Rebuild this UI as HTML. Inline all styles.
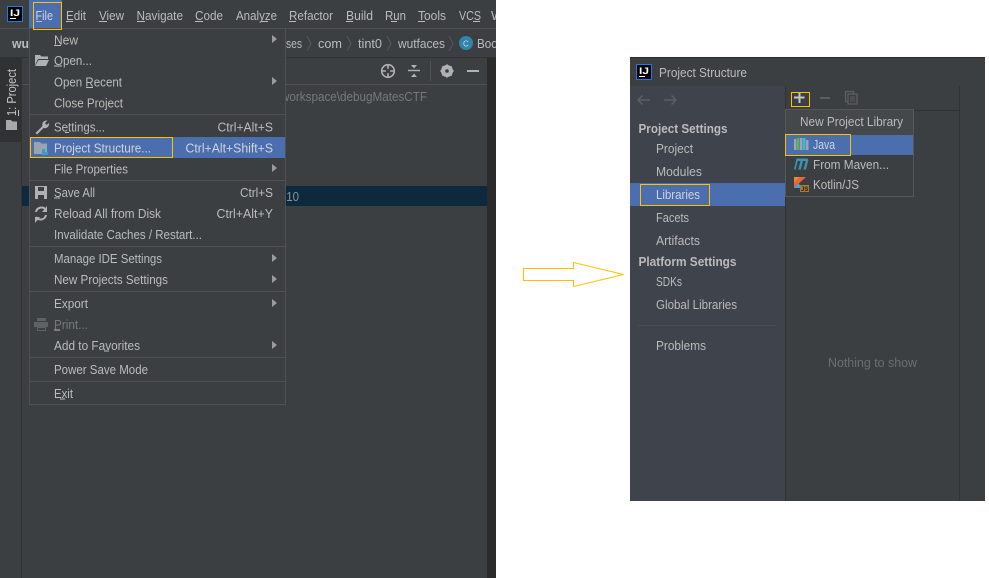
<!DOCTYPE html>
<html><head><meta charset="utf-8"><style>
html,body{margin:0;padding:0;background:#fff;width:989px;height:578px;overflow:hidden}
svg{display:block}
text{font-family:"Liberation Sans",sans-serif;font-size:13px;fill:#bbbbbb;white-space:pre}
.h{fill:#cfd3da}
.d{fill:#777}
.u{stroke:#bbb;stroke-width:1;shape-rendering:crispEdges}
</style></head><body>
<svg xmlns="http://www.w3.org/2000/svg" width="989" height="578" viewBox="0 0 989 578">
<defs><clipPath id="L"><rect x="0" y="0" width="496" height="578"/></clipPath></defs>
<rect width="989" height="578" fill="#fff"/>
<g clip-path="url(#L)">
<rect x="0" y="0" width="496" height="578" fill="#3c3f41"/>
<rect x="0" y="28" width="496" height="1" fill="#515151"/>
<rect x="0" y="57" width="496" height="1" fill="#323232"/>
<rect x="21" y="58" width="1" height="520" fill="#323232"/>
<rect x="0" y="58" width="21" height="84" fill="#2f3132"/>
<rect x="22" y="84" width="465" height="1" fill="#515151"/>
<rect x="487" y="58" width="9" height="520" fill="#2b2b2b"/>
<rect x="22" y="186" width="465" height="20" fill="#0d293e"/>
<!-- logo -->
<rect x="7.500" y="6.500" width="15" height="15" fill="#000" stroke="#1c7be0"/>
<text x="10" y="16" textLength="10" lengthAdjust="spacingAndGlyphs" style="font-size:9px;font-weight:bold;fill:#fff">IJ</text>
<rect x="10" y="18" width="6" height="1" fill="#fff"/>
<!-- menubar -->
<rect x="29" y="0" width="33" height="28" fill="#4b6eaf"/>
<g>
<text x="35.500" y="20" textLength="17.500" lengthAdjust="spacingAndGlyphs" class="h">File</text>
<text x="66" y="20" textLength="20" lengthAdjust="spacingAndGlyphs">Edit</text>
<text x="99" y="20" textLength="25" lengthAdjust="spacingAndGlyphs">View</text>
<text x="136.500" y="20" textLength="46.500" lengthAdjust="spacingAndGlyphs">Navigate</text>
<text x="195" y="20" textLength="28" lengthAdjust="spacingAndGlyphs">Code</text>
<text x="236" y="20" textLength="41" lengthAdjust="spacingAndGlyphs">Analyze</text>
<text x="289" y="20" textLength="44" lengthAdjust="spacingAndGlyphs">Refactor</text>
<text x="346" y="20" textLength="27" lengthAdjust="spacingAndGlyphs">Build</text>
<text x="385" y="20" textLength="21" lengthAdjust="spacingAndGlyphs">Run</text>
<text x="418" y="20" textLength="28" lengthAdjust="spacingAndGlyphs">Tools</text>
<text x="459" y="20" textLength="22" lengthAdjust="spacingAndGlyphs">VCS</text>
<text x="491" y="20">Window</text>
<path class="u" d="M36 21.500h6M66 21.500h7M99 21.500h8M137 21.500h8M195 21.500h8M262 21.500h6M289 21.500h7M346 21.500h7M391 21.500h6M418 21.500h7M473 21.500h7"/>
</g>
<!-- breadcrumb -->
<text x="12" y="48" textLength="17" lengthAdjust="spacingAndGlyphs" style="font-weight:bold">wu</text>
<text x="286" y="48" textLength="16" lengthAdjust="spacingAndGlyphs">ses</text>
<text x="318" y="48" textLength="24" lengthAdjust="spacingAndGlyphs">com</text>
<text x="358" y="48" textLength="24" lengthAdjust="spacingAndGlyphs">tint0</text>
<text x="398" y="48" textLength="47" lengthAdjust="spacingAndGlyphs">wutfaces</text>
<text x="477" y="48" textLength="24" lengthAdjust="spacingAndGlyphs">Boot</text>
<path d="M307 36l4 7.500-4 7.500M347 36l4 7.500-4 7.500M387 36l4 7.500-4 7.500M449 36l4 7.500-4 7.500" fill="none" stroke="#56595b"/>
<circle cx="466" cy="43" r="7" fill="#2f84a8"/>
<text x="463" y="46.500" style="font-size:8px;fill:#cde">C</text>
<!-- toolbar -->
<circle cx="388" cy="71" r="6.300" fill="none" stroke="#afb1b3" stroke-width="1.600"/>
<path d="M388 64v14M381 71h14" stroke="#afb1b3" stroke-width="1.600"/>
<circle cx="388" cy="71" r="2.200" fill="#3c3f41"/>
<path d="M408 70.500h12" stroke="#afb1b3" stroke-width="1.400"/>
<path d="M411 65h6l-3 3.500zM411 77h6l-3-3.500z" fill="#afb1b3"/>
<rect x="430" y="61" width="1" height="20" fill="#515151"/>
<circle cx="447" cy="71" r="4.500" fill="none" stroke="#afb1b3" stroke-width="3"/>
<path d="M447 64.500v13M440.500 71h13M442.400 66.400l9.200 9.200M451.600 66.400l-9.200 9.200" stroke="#afb1b3" stroke-width="2"/>
<circle cx="447" cy="71" r="1.800" fill="#3c3f41"/>
<rect x="467" y="70" width="12" height="2" fill="#afb1b3"/>
<text x="281" y="101" textLength="146" lengthAdjust="spacingAndGlyphs" style="fill:#787878">workspace\debugMatesCTF</text>
<text x="283" y="201" textLength="16" lengthAdjust="spacingAndGlyphs" style="fill:#8a9298">.10</text>
<!-- tool tab -->
<text transform="translate(16,116) rotate(-90)" textLength="47" lengthAdjust="spacingAndGlyphs" style="fill:#c4c4c4">1: Project</text>
<rect x="18" y="110" width="1" height="6" fill="#c4c4c4"/>
<path d="M6 120h5l1.500 1.500H17V130H6z" fill="#a8a8a8"/>

<!-- FILE MENU -->
<rect x="29.500" y="28.500" width="256" height="376" fill="#3c3f41" stroke="#515151"/>
<path d="M30 114.500h255M30 180.500h255M30 246.500h255M30 291.500h255M30 357.500h255M30 381.500h255" stroke="#515151"/>
<rect x="30" y="137" width="255" height="21" fill="#4b6eaf"/>
<g>
<text x="54" y="44.500" textLength="24" lengthAdjust="spacingAndGlyphs">New</text>
<text x="54" y="65" textLength="38" lengthAdjust="spacingAndGlyphs">Open...</text>
<text x="54" y="86.500" textLength="68" lengthAdjust="spacingAndGlyphs">Open Recent</text>
<text x="54" y="107.500" textLength="69" lengthAdjust="spacingAndGlyphs">Close Project</text>
<text x="54" y="131.500" textLength="51" lengthAdjust="spacingAndGlyphs">Settings...</text>
<text x="54" y="152.500" textLength="97" lengthAdjust="spacingAndGlyphs" class="h">Project Structure...</text>
<text x="54" y="173.500" textLength="74" lengthAdjust="spacingAndGlyphs">File Properties</text>
<text x="54" y="197" textLength="41" lengthAdjust="spacingAndGlyphs">Save All</text>
<text x="54" y="218" textLength="107" lengthAdjust="spacingAndGlyphs">Reload All from Disk</text>
<text x="54" y="239" textLength="148" lengthAdjust="spacingAndGlyphs">Invalidate Caches / Restart...</text>
<text x="54" y="263" textLength="108" lengthAdjust="spacingAndGlyphs">Manage IDE Settings</text>
<text x="54" y="284" textLength="114" lengthAdjust="spacingAndGlyphs">New Projects Settings</text>
<text x="54" y="308" textLength="34" lengthAdjust="spacingAndGlyphs">Export</text>
<text x="54" y="329" textLength="34" lengthAdjust="spacingAndGlyphs" class="d">Print...</text>
<text x="54" y="350" textLength="86" lengthAdjust="spacingAndGlyphs">Add to Favorites</text>
<text x="54" y="374" textLength="94" lengthAdjust="spacingAndGlyphs">Power Save Mode</text>
<text x="54" y="398" textLength="19" lengthAdjust="spacingAndGlyphs">Exit</text>
<text x="217.500" y="131.500" textLength="55.500" lengthAdjust="spacingAndGlyphs">Ctrl+Alt+S</text>
<text x="185.500" y="152.500" textLength="87.500" lengthAdjust="spacingAndGlyphs" class="h">Ctrl+Alt+Shift+S</text>
<text x="240" y="197" textLength="33" lengthAdjust="spacingAndGlyphs">Ctrl+S</text>
<text x="216.500" y="218" textLength="56.500" lengthAdjust="spacingAndGlyphs">Ctrl+Alt+Y</text>
<path class="u" d="M54 45.500h7M54 66h8M86 87.500h7M65 132.500h4M54 198h6M54 330h6M104 351h5M60 399h5"/>
<path d="M272 35v8l5-4zM272 77v8l5-4zM272 164v8l5-4zM272 254v8l5-4zM272 275v8l5-4zM272 299v8l5-4zM272 341v8l5-4z" fill="#9a9c9e"/>
</g>
<!-- menu icons -->
<path d="M35 55h5l1.500 1.500H48V59H38l-3 6z" fill="#afb1b3"/><path d="M38.500 60H49l-3 6H35z" fill="#afb1b3"/>
<path d="M35.500 133l7-7c-1-3 1-6 5-5.500l-2.500 2.500 1.500 2 2.500-2c.5 3.500-2.500 6-5.500 5l-6.500 6.500z" fill="#afb1b3"/>
<path d="M34 142h6l1.500 1.500H47V154H34z" fill="#9aa3b0"/><rect x="42" y="149" width="3" height="3" fill="#3a9bd0"/><rect x="45" y="152" width="3" height="3" fill="#3a9bd0"/><rect x="42" y="152" width="3" height="3" fill="#3a9bd0"/>
<path d="M35 186h12v13H35z" fill="#afb1b3"/><rect x="38" y="187" width="6" height="4" fill="#3c3f41"/><rect x="38" y="195" width="6" height="4" fill="#3c3f41"/>
<path d="M36 212a5.500 5.500 0 0 1 10-2M46 215a5.500 5.500 0 0 1-10 2" fill="none" stroke="#afb1b3" stroke-width="2"/><path d="M47 206v6h-5zM35 223v-6h5z" fill="#afb1b3"/>
<rect x="37" y="318" width="9" height="3" fill="#5f6264"/><rect x="34" y="322" width="14" height="5" fill="#5f6264"/><rect x="37.500" y="327.500" width="8" height="3" fill="none" stroke="#5f6264"/>
<!-- yellow boxes -->
<rect x="33.500" y="2.500" width="28" height="27" fill="none" stroke="#ffc000"/>
<rect x="30.500" y="137.500" width="142" height="20" fill="none" stroke="#ffc000"/>
</g>

<!-- arrow -->
<path d="M523.500 268.500H573.500V262.500L623.500 274.500L573.500 286.500V280.500H523.500Z" fill="#fff" stroke="#ffc000"/>

<!-- DIALOG -->
<rect x="630" y="57" width="355" height="444" fill="#3c3f41"/>
<rect x="630" y="57" width="355" height="1" fill="#2b2b2b"/>
<rect x="630" y="86" width="155" height="415" fill="#3e434c"/>
<rect x="785" y="86" width="1" height="415" fill="#323232"/>
<rect x="959" y="86" width="1" height="415" fill="#323232"/>
<rect x="785" y="110" width="175" height="1" fill="#323232"/>
<rect x="636.500" y="64.500" width="15" height="15" fill="#000" stroke="#1c7be0"/>
<text x="639" y="74" textLength="10" lengthAdjust="spacingAndGlyphs" style="font-size:9px;font-weight:bold;fill:#fff">IJ</text>
<rect x="639" y="76" width="6" height="1" fill="#fff"/>
<text x="659" y="77" textLength="88" lengthAdjust="spacingAndGlyphs">Project Structure</text>
<path d="M650 100h-12M642.500 95.500L638 100l4.500 4.500M664 100h12M671.500 95.500L676 100l-4.500 4.500" fill="none" stroke="#5b5f64" stroke-width="1.500"/>
<rect x="630" y="183" width="155" height="23" fill="#4b6eaf"/>
<text x="638.500" y="133" textLength="89" lengthAdjust="spacingAndGlyphs" style="font-weight:bold">Project Settings</text>
<text x="656" y="153" textLength="37" lengthAdjust="spacingAndGlyphs">Project</text>
<text x="656" y="176" textLength="46" lengthAdjust="spacingAndGlyphs">Modules</text>
<text x="656" y="199" textLength="44" lengthAdjust="spacingAndGlyphs" class="h">Libraries</text>
<text x="656" y="222" textLength="33" lengthAdjust="spacingAndGlyphs">Facets</text>
<text x="656" y="245" textLength="44" lengthAdjust="spacingAndGlyphs">Artifacts</text>
<text x="638.500" y="266" textLength="98" lengthAdjust="spacingAndGlyphs" style="font-weight:bold">Platform Settings</text>
<text x="656" y="286" textLength="26" lengthAdjust="spacingAndGlyphs">SDKs</text>
<text x="656" y="309" textLength="81" lengthAdjust="spacingAndGlyphs">Global Libraries</text>
<rect x="638" y="325" width="138" height="1" fill="#4a4d50"/>
<text x="656" y="350" textLength="50" lengthAdjust="spacingAndGlyphs">Problems</text>
<text x="828" y="367" textLength="89" lengthAdjust="spacingAndGlyphs" style="fill:#6b6e70">Nothing to show</text>
<rect x="640.500" y="184.500" width="69" height="21" fill="none" stroke="#ffc000"/>
<!-- dialog toolbar -->
<path d="M794 97.500h10.500M799.500 92.500v10.500" stroke="#c4c6c8" stroke-width="2"/>
<rect x="791.500" y="92.500" width="18" height="14" fill="none" stroke="#ffc000"/>
<rect x="820" y="97" width="10" height="2" fill="#5b5e60"/>
<path d="M845.500 91.500h8v2M848 94h9v10h-9zM845.500 91.500v10h2" fill="none" stroke="#5b5e60" stroke-width="1.300"/>
<path d="M850 97h5M850 99h5M850 101h5" stroke="#5b5e60"/>
<!-- popup -->
<rect x="785.500" y="109.500" width="128" height="87" fill="#3c3f41" stroke="#555759"/>
<rect x="786" y="110" width="127" height="25" fill="#45484a"/>
<rect x="786" y="135" width="127" height="20" fill="#4b6eaf"/>
<text x="800" y="126" textLength="103" lengthAdjust="spacingAndGlyphs">New Project Library</text>
<text x="813" y="149" textLength="22" lengthAdjust="spacingAndGlyphs" class="h">Java</text>
<text x="813" y="169" textLength="76" lengthAdjust="spacingAndGlyphs">From Maven...</text>
<text x="813" y="189" textLength="46" lengthAdjust="spacingAndGlyphs">Kotlin/JS</text>
<rect x="794" y="139" width="2.500" height="11" fill="#9aa7b0"/><rect x="797" y="138" width="2.500" height="12" fill="#62b543"/><rect x="800" y="138" width="2.500" height="12" fill="#9aa7b0"/><rect x="803" y="138" width="2.500" height="12" fill="#40b6e0"/><rect x="806" y="140" width="2.500" height="10" fill="#9aa7b0"/>
<path d="M794 169.500l2.500-11h10c2 0 2 1.500 1.500 3l-2 8h-2.500l2.200-8.500h-2.700l-2.200 8.500h-2.500l2.200-8.500h-2.700l-2.200 8.500z" fill="#3a94ad"/>
<path d="M794 177h6l-6 6z" fill="#f08a2c"/><path d="M800 177h6l-12 11v-5z" fill="#e8663a"/><path d="M794 188l4.500-4.500 3 3-1.500 1.500z" fill="#39a8e0"/>
<rect x="800" y="185" width="9" height="7" fill="#a67c2e"/>
<text x="801" y="191" style="font-size:6px;font-weight:bold;fill:#222">JS</text>
<rect x="785.500" y="134.500" width="65" height="21" fill="none" stroke="#ffc000"/>
</svg>
</body></html>
